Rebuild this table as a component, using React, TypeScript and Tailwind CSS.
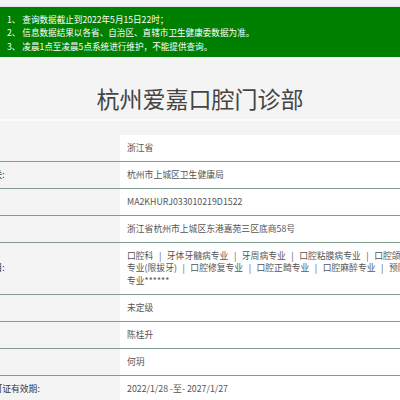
const notices = [
  '1、 查询数据截止到2022年5月15日22时；',
  '2、 信息数据结果以各省、自治区、直辖市卫生健康委数据为准。',
  '3、 凌晨1点至凌晨5点系统进行维护，不能提供查询。',
]

const lines1 = ['口腔科', '牙体牙髓病专业', '牙周病专业', '口腔粘膜病专业', '口腔颌面外科']
const lines2 = ['专业(限拔牙)', '口腔修复专业', '口腔正畸专业', '口腔麻醉专业', '预防口腔']

function Sep() {
  return <span className="mx-[5.5px] text-[#555]">|</span>
}

function Joined({ items }: { items: string[] }) {
  return (
    <div className="whitespace-nowrap">
      {items.map((t, i) => (
        <span key={t}>
          {i > 0 && <Sep />}
          {t}
        </span>
      ))}
    </div>
  )
}

// 左侧标签列被页面横向滚动裁掉，只有较长的标签露出末尾
const rows: { label: string; value: React.ReactNode }[] = [
  { label: '', value: '浙江省' },
  { label: '登记机关:', value: '杭州市上城区卫生健康局' },
  { label: '', value: 'MA2KHURJ033010219D1522' },
  { label: '', value: '浙江省杭州市上城区东港嘉苑三区底商58号' },
  {
    label: '诊疗科目:',
    value: (
      <>
        <Joined items={lines1} />
        <Joined items={lines2} />
        <div>专业******</div>
      </>
    ),
  },
  { label: '', value: '未定级' },
  { label: '', value: '陈桂升' },
  { label: '', value: '何玥' },
  { label: '执业许可证有效期:', value: '2022/1/28 -至- 2027/1/27' },
]

export default function App() {
  return (
    <div
      className="w-full h-[400px] overflow-hidden bg-[#f4f4f4]"
      style={{ fontFamily: '"Noto Sans CJK SC", "Microsoft YaHei", sans-serif' }}
    >
      {/* 顶部留白 */}
      <div className="h-[7px] bg-[#f3f3f3] border-b border-[#e2e2e2]" />

      {/* 提示 */}
      <div className="bg-[#008000] text-white text-[8.6px] leading-[13.5px] pl-[7px] pt-[5.5px] pb-[4px]">
        {notices.map((n) => (
          <div key={n} className="whitespace-nowrap">
            {n}
          </div>
        ))}
      </div>

      {/* 标题 */}
      <div className="h-[62px] pt-[26px] text-center text-[23px] leading-[30px] text-[#444]">
        杭州爱嘉口腔门诊部
      </div>
      <div className="h-[2px] bg-[#fbfbfb]" />

      {/* 信息表 */}
      <div className="mt-[14px] ml-[-40px] w-[700px]">
        {rows.map((r, i) => (
          <div
            key={i}
            className={`grid grid-cols-[160px_1fr] text-[8.8px] leading-[12.5px] ${
              i > 0 ? 'border-t border-[#7f9d8e]' : ''
            }`}
          >
            <div className="pl-[7px] py-[6.75px] text-[#333] whitespace-nowrap flex items-center">
              {r.label}
            </div>
            <div className="bg-white pl-[7px] py-[6.75px] text-[#555]">{r.value}</div>
          </div>
        ))}
        <div className="border-t border-[#7f9d8e]" />
      </div>
    </div>
  )
}
